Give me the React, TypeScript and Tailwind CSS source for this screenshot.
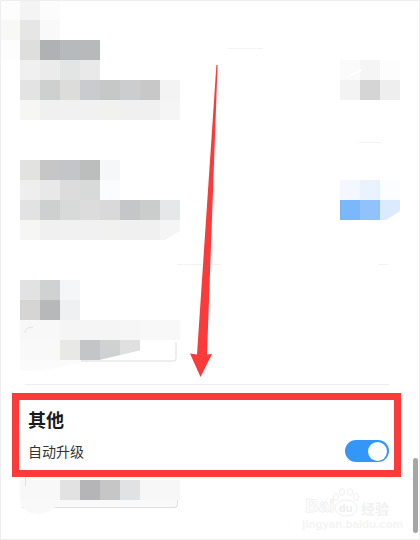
const rows: { left: string[]; right?: string[] }[] = [
  { left: ["bg-[#fdfdfd]", "bg-[#f4f4f4]", "bg-[#fcfcfc]"] },
  { left: ["bg-[#f8f8f7]", "bg-[#e6e6e6]", "bg-[#f9f9f9]"] },
  { left: ["bg-[#fdfdfd]", "bg-[#dededc]", "bg-[#b0b1b3]", "bg-[#b6babd]", "bg-[#b8b9ba]"] },
  {
    left: ["bg-white", "bg-[#f0f0f1]", "bg-[#ebebec]", "bg-[#e3e5e4]", "bg-[#e9e9ea]"],
    right: ["bg-[#fbfbfb]", "bg-[#f5f5f5]", "bg-[#fdfdfd]"],
  },
  {
    left: ["bg-white", "bg-[#e3e3e4]", "bg-[#ced0d0]", "bg-[#dcdcdb]", "bg-[#cacbcf]", "bg-[#c6c8c8]", "bg-[#cccdcf]", "bg-[#c8c8c9]", "bg-[#f3f3f4]"],
    right: ["bg-[#f3f3f3]", "bg-[#d5d5d5]", "bg-[#eeeeee]"],
  },
  { left: ["bg-white", "bg-[#f6f6f5]", "bg-[#f0f0f0]", "bg-[#f1f1f1]", "bg-[#f1f1f1]", "bg-[#f1f1f0]", "bg-[#f0f0f0]", "bg-[#f0f0f0]", "bg-[#f5f5f5]"] },
  { left: [] },
  { left: [] },
  { left: ["bg-white", "bg-[#e2e2e0]", "bg-[#c6c6c7]", "bg-[#c4c5c8]", "bg-[#bcbebd]", "bg-[#f6f7f9]"] },
  {
    left: ["bg-white", "bg-[#eeeeef]", "bg-[#e8e8e9]", "bg-[#dcdcdd]", "bg-[#d8d9d9]", "bg-[#fbfcfe]"],
    right: ["bg-[#f4f8fe]", "bg-[#e8f3fe]", "bg-[#fbfdff]"],
  },
  {
    left: ["bg-white", "bg-[#e2e2e3]", "bg-[#ced0d0]", "bg-[#d8dada]", "bg-[#dcdcdc]", "bg-[#d9d9da]", "bg-[#c5c6c8]", "bg-[#cbcccc]", "bg-[#e6e7e9]"],
    right: ["bg-[#7ab8fb]", "bg-[#90c2fb]", "bg-[#dbeafc]"],
  },
  { left: ["bg-white", "bg-[#f6f6f5]", "bg-[#f0f0f0]", "bg-[#f1f1f1]", "bg-[#f1f1f1]", "bg-[#f1f1f0]", "bg-[#f0f0f0]", "bg-[#f0f0f0]", "bg-[#f5f5f5]"] },
  { left: [] },
  { left: [] },
  { left: ["bg-white", "bg-[#e2e2e2]", "bg-[#d0d1d1]", "bg-[#f5f6f8]"] },
  { left: ["bg-white", "bg-[#d6d5d4]", "bg-[#b7b8ba]", "bg-[#eff0f2]"] },
  { left: ["bg-white", "bg-[#f8f8f8]", "bg-[#f8f8f8]", "bg-[#f5f5f5]", "bg-[#f5f5f5]", "bg-[#f5f5f5]", "bg-[#f6f6f6]", "bg-[#f8f8f8]", "bg-[#f8f8f8]"] },
  { left: ["bg-white", "bg-[#f9f9f9]", "bg-[#f9f9f9]", "bg-[#e8e8e6]", "bg-[#c4c5c7]", "bg-[#d0d2d2]", "bg-[#e0e0e0]"] },
];

const lastRow = ["bg-[#f8f8f8]", "bg-[#f8f8f8]", "bg-[#e2e2e2]", "bg-[#b5b5b8]", "bg-[#c5c6c5]", "bg-[#e1e2e3]", "bg-[#f7f7f7]", "bg-[#f7f7f7]"];

function Cells({ items }: { items: string[] }) {
  return (
    <div className="flex">
      {items.map((c, i) => (
        <div key={i} className={`w-5 h-5 ${c}`} />
      ))}
    </div>
  );
}

// arrow, paint smears and leftover divider bits on top of the page
function Markup() {
  return (
    <svg className="absolute inset-0 pointer-events-none" width="420" height="540" viewBox="0 0 420 540">
      <polygon points="95,361 176,342 176,361" fill="#ffffff" />
      <polygon points="20,360 95,360 40,371 20,370" fill="#fbfbfb" />
      <path d="M81 361 H174 Q176 361 176 359 V342" fill="none" stroke="#dedede" />
      <path d="M25 333 Q25 327 33 327" fill="none" stroke="#e2e2e2" />
      <polygon points="165,240 180,231 180,240" fill="#ffffff" />
      <polygon points="386,220 400,211 400,220" fill="#ffffff" />
      <polygon points="341,80 361,69 362,71 341,80" fill="#ffffff" />
      <path d="M227 48.5 H263 M359 142.5 H382 M177 264.5 H221 M378 264.5 H389" stroke="#f3f3f3" />
      <polygon
        points="216.4,65 217.6,65 207,354.5 212,354 200.5,377 190,353.5 197,354.5"
        fill="#fb3a3a"
      />
      <path d="M20 500 H60 V503 Q48 515 36 514 Q22 512 20 500 Z" fill="#f9f9f9" />
      <path d="M25.5 478 V486" stroke="#dedede" />
      <g fill="#ffffff" stroke="#f0f0f0">
        <ellipse cx="336" cy="497" rx="2.5" ry="3.5" />
        <ellipse cx="342" cy="492" rx="2.5" ry="3.5" />
        <ellipse cx="350" cy="492" rx="2.5" ry="3.5" />
        <ellipse cx="356" cy="497" rx="2.5" ry="3.5" />
        <ellipse cx="346" cy="508" rx="11" ry="8" />
      </g>
    </svg>
  );
}

function Watermark() {
  return (
    <>
      <span className="absolute left-[305px] top-[495px] text-[19px] leading-[22px] font-bold text-white [-webkit-text-stroke:0.75px_#eeeeee] font-['Liberation_Sans',sans-serif]">
        Bai
      </span>
      <span className="absolute left-[339px] top-[502px] text-[11px] leading-[12px] font-bold text-[#eeeeee] font-['Liberation_Sans',sans-serif]">
        du
      </span>
      <span className="absolute left-[361px] top-[498px] text-[14px] leading-[20px] font-bold text-[#f1f1f1]">
        经验
      </span>
      <span className="absolute left-[302px] top-[517px] text-[11.5px] leading-[14px] font-bold text-[#f4f4f4] font-['Liberation_Sans',sans-serif]">
        jingyan.baidu.com
      </span>
    </>
  );
}

export default function App() {
  return (
    <div className="relative w-[420px] h-[540px] overflow-hidden bg-white font-['Noto_Sans_CJK_SC','Liberation_Sans',sans-serif]">
      {/* mosaic settings rows */}
      {rows.map((r, i) => (
        <div key={i} className="flex justify-between h-5 pr-5">
          <Cells items={r.left} />
          {r.right && <Cells items={r.right} />}
        </div>
      ))}

      <div className="mt-6 ml-[25px] w-[364px] h-px bg-[#eeeeee]" />

      {/* highlighted section */}
      <div className="mt-2 ml-3 w-[389px] h-[84px] border-[7px] border-[#fb3a3a] pl-[9px] pr-[5px] flex flex-col">
        <h2 className="mt-[7px] text-[18px] leading-[24px] font-bold text-[#1a1a1a]">其他</h2>
        <div className="mt-[9px] flex items-center justify-between h-[22px]">
          <span className="text-[14px] leading-[20px] text-[#333333]">自动升级</span>
          <div className="w-11 h-[22px] rounded-full bg-[#3396f8] flex items-center justify-end pr-0.5">
            <div className="w-[19px] h-[19px] rounded-full bg-white" />
          </div>
        </div>
      </div>

      <div className="mt-[3px] ml-5">
        <Cells items={lastRow} />
        <div className="w-[156px] h-2 ml-[2px] bg-[#f9f9f9] border-b border-r border-[#dedede] rounded-br-sm" />
      </div>

      <Markup />
      <Watermark />

      {/* scrollbar */}
      <div className="absolute left-[413px] top-[458px] w-[5px] h-[75px] rounded-full bg-[#a6a6a6]" />
      {/* window edge */}
      <div className="absolute inset-0 border border-[#eeeeee] pointer-events-none" />
    </div>
  );
}
